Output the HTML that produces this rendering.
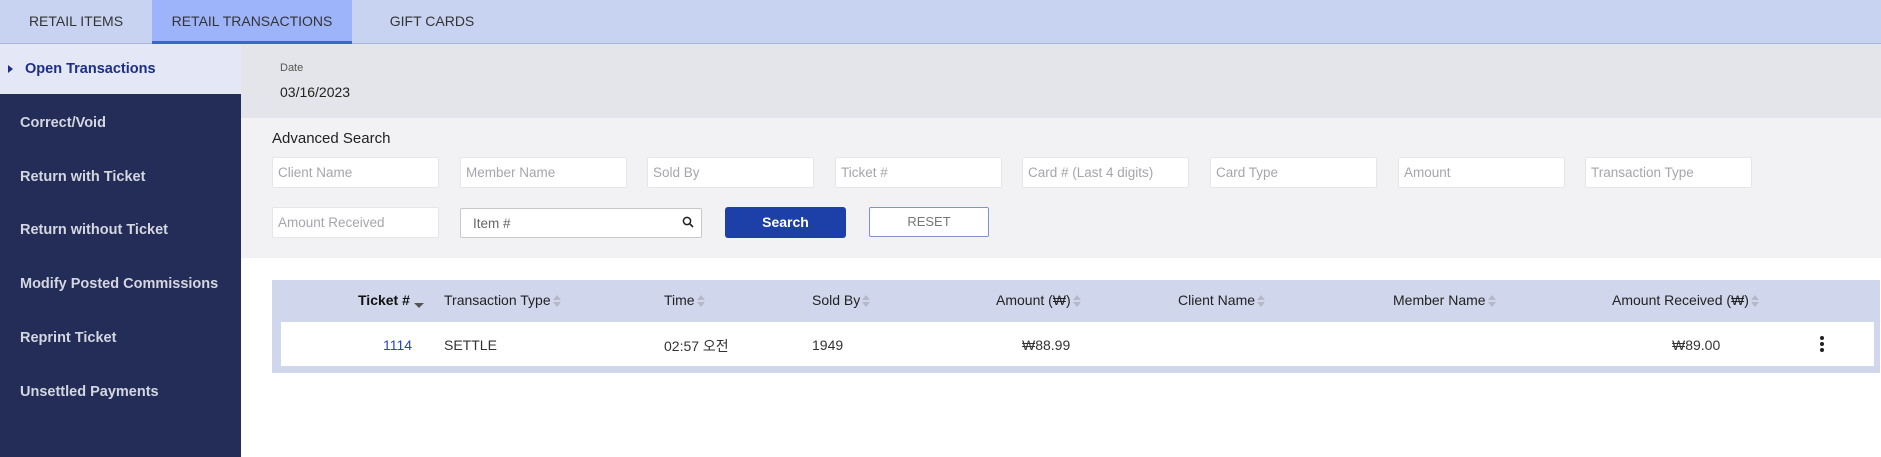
<!DOCTYPE html>
<html><head><meta charset="utf-8"><style>
*{box-sizing:border-box;margin:0;padding:0}
body{width:1881px;height:457px;overflow:hidden;background:#fff;font-family:"Liberation Sans","Noto Sans CJK KR",sans-serif;position:relative}
.abs{position:absolute}
.tabs{left:0;top:0;width:1881px;height:44px;background:#c8d3f1;border-bottom:1px solid #a9b6dc}
.tab{top:0;height:44px;line-height:42px;font-size:14px;color:#333;text-align:center}
.side{left:0;top:44px;width:241px;height:413px;background:#232d58}
.si{left:20px;font-size:14.5px;font-weight:bold;color:#d4d6e0}
.inp{height:31px;background:#fff;border:1px solid #e6e6ea;border-radius:2px;font-size:13.5px;color:#a5a5ad;padding-left:5px;line-height:29px;width:167px}
.th{top:292px;font-size:14px;color:#222}
.td{top:337px;font-size:14px;color:#333}
.ar{display:inline-block;width:9px;height:14px;vertical-align:middle;margin-left:2px;position:relative}
.ar:before{content:"";position:absolute;left:0;top:1px;border:4.5px solid transparent;border-bottom:5px solid #b4b8c8;border-top:0}
.ar:after{content:"";position:absolute;left:0;top:8px;border:4.5px solid transparent;border-top:5px solid #b4b8c8;border-bottom:0}
</style></head><body>
<div class="abs tabs"></div>
<div class="abs tab" style="left:0;width:152px">RETAIL ITEMS</div>
<div class="abs tab" style="left:152px;width:200px;background:#9db4fb;border-bottom:3px solid #3b67c9">RETAIL TRANSACTIONS</div>
<div class="abs tab" style="left:352px;width:160px">GIFT CARDS</div>

<div class="abs side"></div>
<div class="abs" style="left:0;top:44px;width:241px;height:50px;background:#e3e7f6"></div>
<div class="abs" style="left:8px;top:65px;border-left:5px solid #1c2e8a;border-top:4px solid transparent;border-bottom:4px solid transparent"></div>
<div class="abs" style="left:25px;top:61px;font-size:14.5px;font-weight:bold;color:#1c2e8a">Open Transactions</div>
<div class="abs si" style="top:115px">Correct/Void</div>
<div class="abs si" style="top:169px">Return with Ticket</div>
<div class="abs si" style="top:222px">Return without Ticket</div>
<div class="abs si" style="top:276px">Modify Posted Commissions</div>
<div class="abs si" style="top:330px">Reprint Ticket</div>
<div class="abs si" style="top:384px">Unsettled Payments</div>

<div class="abs" style="left:241px;top:44px;width:1640px;height:74px;background:#e4e5ea"></div>
<div class="abs" style="left:280px;top:62px;font-size:11px;color:#555">Date</div>
<div class="abs" style="left:280px;top:84px;font-size:14px;color:#222">03/16/2023</div>
<div class="abs" style="left:241px;top:118px;width:1640px;height:140px;background:#f2f2f5"></div>
<div class="abs" style="left:272px;top:130px;font-size:15px;color:#222">Advanced Search</div>
<div class="abs inp" style="left:272px;top:157px">Client Name</div>
<div class="abs inp" style="left:460px;top:157px">Member Name</div>
<div class="abs inp" style="left:647px;top:157px">Sold By</div>
<div class="abs inp" style="left:835px;top:157px">Ticket #</div>
<div class="abs inp" style="left:1022px;top:157px">Card # (Last 4 digits)</div>
<div class="abs inp" style="left:1210px;top:157px">Card Type</div>
<div class="abs inp" style="left:1398px;top:157px">Amount</div>
<div class="abs inp" style="left:1585px;top:157px">Transaction Type</div>
<div class="abs inp" style="left:272px;top:207px">Amount Received</div>
<div class="abs inp" style="left:460px;top:208px;width:242px;height:30px;border-color:#c8c8cc;color:#666;padding-left:12px">Item #</div>
<svg class="abs" style="left:682px;top:216px" width="12" height="12" viewBox="0 0 12 12"><circle cx="5" cy="5" r="3.6" fill="none" stroke="#222" stroke-width="1.5"/><path d="M7.6 7.6L11 11" stroke="#222" stroke-width="1.6"/></svg>
<div class="abs" style="left:725px;top:207px;width:121px;height:31px;background:#1c3fa8;border-radius:3px;color:#fff;font-size:14px;font-weight:bold;text-align:center;line-height:31px">Search</div>
<div class="abs" style="left:869px;top:207px;width:120px;height:30px;background:#fff;border:1px solid #7d93cf;border-radius:2px;color:#777;font-size:13px;text-align:center;line-height:28px">RESET</div>

<div class="abs" style="left:272px;top:280px;width:1608px;height:93px;background:#d0d7ec"></div>
<div class="abs" style="left:281px;top:322px;width:1593px;height:44px;background:#fff"></div>
<div class="abs th" style="left:358px;font-weight:bold;color:#111">Ticket #<span class="abs" style="left:56px;top:11px;border:5px solid transparent;border-top:5px solid #555;border-bottom:0"></span></div>
<div class="abs th" style="left:444px">Transaction Type<span class="ar"></span></div>
<div class="abs th" style="left:664px">Time<span class="ar"></span></div>
<div class="abs th" style="left:812px">Sold By<span class="ar"></span></div>
<div class="abs th" style="left:996px">Amount (₩)<span class="ar"></span></div>
<div class="abs th" style="left:1178px">Client Name<span class="ar"></span></div>
<div class="abs th" style="left:1393px">Member Name<span class="ar"></span></div>
<div class="abs th" style="left:1612px">Amount Received (₩)<span class="ar"></span></div>
<div class="abs td" style="left:383px;color:#2a46b0">1114</div>
<div class="abs td" style="left:444px">SETTLE</div>
<div class="abs td" style="left:664px;top:336px">02:57 오전</div>
<div class="abs td" style="left:1022px">₩88.99</div>
<div class="abs td" style="left:812px">1949</div>
<div class="abs td" style="left:1672px">₩89.00</div>
<div class="abs" style="left:1820px;top:336px;width:4px;height:4px;border-radius:2px;background:#222;box-shadow:0 6px 0 #222,0 12px 0 #222"></div>
</body></html>
